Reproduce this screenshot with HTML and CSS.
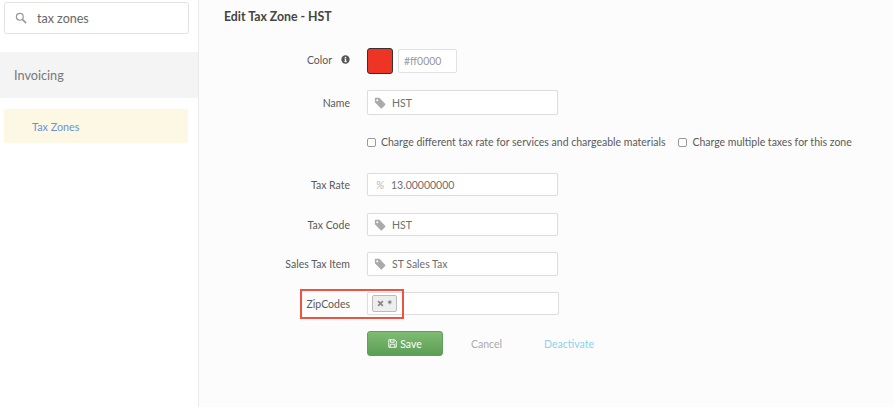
FILE: index.html
```html
<!DOCTYPE html>
<html lang="en">
<head>
<meta charset="utf-8">
<title>Edit Tax Zone - HST</title>
<link rel="stylesheet" href="styles.css">
</head>
<body>
<svg class="defs" width="0" height="0" aria-hidden="true">
  <symbol id="tag" viewBox="0 0 14 14">
    <path fill="currentColor" d="M1 1.5 A.6 .6 0 0 1 1.6 1 H6.2 L13 7.8 A1 1 0 0 1 13 9.2 L9.2 13 A1 1 0 0 1 7.8 13 L1 6.2 Z M3.8 2.6 A1.2 1.2 0 1 0 3.8 5 A1.2 1.2 0 1 0 3.8 2.6 Z" fill-rule="evenodd"/>
  </symbol>
</svg>
<div class="app">
  <aside class="sidebar">
    <div class="search">
      <svg class="search-icon" viewBox="0 0 14 14"><circle cx="5.6" cy="5.6" r="4" fill="none" stroke="currentColor" stroke-width="1.4"/><path d="M8.6 8.6 L13 13" stroke="currentColor" stroke-width="1.8"/></svg>
      <span>tax zones</span>
    </div>
    <div class="section">Invoicing</div>
    <div class="nav-item">Tax Zones</div>
  </aside>
  <main class="main">
    <h1 class="title">Edit Tax Zone - HST</h1>
    <div class="row row-color">
      <div class="label label-color">Color
        <svg class="info" viewBox="0 0 10 10"><circle cx="5" cy="5" r="4.6" fill="currentColor"/><rect x="4.3" y="4.2" width="1.5" height="3.6" fill="#fcfcfc"/><rect x="3.7" y="7" width="2.7" height=".9" fill="#fcfcfc"/><rect x="3.7" y="4.1" width="1.6" height=".8" fill="#fcfcfc"/><circle cx="5" cy="2.8" r=".9" fill="#fcfcfc"/></svg>
      </div>
      <div class="color-controls">
        <div class="swatch"></div>
        <div class="hex">#ff0000</div>
      </div>
    </div>
    <div class="row row-name">
      <div class="label">Name</div>
      <div class="input tall"><svg class="ic"><use href="#tag"/></svg><span>HST</span></div>
    </div>
    <div class="row row-checks">
      <div class="label"></div>
      <div class="checks">
        <label class="check"><span class="box"></span>Charge different tax rate for services and chargeable materials</label>
        <label class="check"><span class="box"></span>Charge multiple taxes for this zone</label>
      </div>
    </div>
    <div class="row row-rate">
      <div class="label">Tax Rate</div>
      <div class="input"><span class="pct">%</span><span>13.00000000</span></div>
    </div>
    <div class="row row-code">
      <div class="label">Tax Code</div>
      <div class="input"><svg class="ic"><use href="#tag"/></svg><span>HST</span></div>
    </div>
    <div class="row row-item">
      <div class="label">Sales Tax Item</div>
      <div class="input tall"><svg class="ic"><use href="#tag"/></svg><span>ST Sales Tax</span></div>
    </div>
    <div class="row row-zip">
      <div class="highlight"></div>
      <div class="label">ZipCodes</div>
      <div class="input zip"><span class="chip"><svg class="x" viewBox="0 0 8 8"><path d="M1.3 1.3 L6.7 6.7 M6.7 1.3 L1.3 6.7" stroke="currentColor" stroke-width="2"/></svg><span class="star">*</span></span></div>
    </div>
    <div class="actions">
      <button class="save" type="button">
        <svg class="disk" viewBox="0 0 12 12"><path fill="none" stroke="currentColor" stroke-width="1.2" d="M1 1 H9 L11 3 V11 H1 Z M3.4 1 V4.4 H8 V1 M3 11 V7 H9 V11"/></svg>Save
      </button>
      <a class="cancel">Cancel</a>
      <a class="deactivate">Deactivate</a>
    </div>
  </main>
</div>
</body>
</html>
```
FILE: styles.css
```css
* { box-sizing: border-box; }
html, body { margin: 0; padding: 0; background: #fff; }
body { font-family: "Lato", "Open Sans", sans-serif; color: #555; font-size: 10.5px; overflow: hidden; }
.defs { position: absolute; }
.app { display: flex; height: 407px; width: 894px; }
.sidebar { width: 199px; flex: none; background: #fff; border-right: 1px solid #eaeaea; padding-top: 2px; }
.search { margin: 0 9px 0 4px; height: 32px; border: 1px solid #e3e3e3; border-radius: 3px; display: flex; align-items: center; padding-left: 10px; font-size: 12.5px; color: #666; gap: 10px; }
.search-icon { width: 12px; height: 12px; color: #999; }
.section { margin-top: 18px; height: 46px; background: #f4f4f4; display: flex; align-items: center; padding-left: 14px; font-size: 12.7px; color: #777; }
.nav-item { margin: 11px 10px 0 4px; height: 34px; background: #fdf8e3; display: flex; align-items: center; padding-left: 28px; font-size: 10.8px; color: #6a91e0; }
.main { flex: 1; background: #fcfcfc; padding: 0 0 0 25px; }
.title { margin: 11px 0 0; height: 12px; line-height: 12px; font-size: 12.3px; font-weight: 700; color: #444; }
.row { display: flex; align-items: center; position: relative; }
.label { width: 126px; flex: none; text-align: right; color: #5a5a5a; margin-right: 17px; }
.label-color { display: flex; justify-content: flex-end; align-items: center; gap: 9px; margin-top: -3px; }
.info { width: 9px; height: 9px; color: #555; }
.row-color { margin-top: 25px; }
.row-name { margin-top: 16px; }
.row-checks { margin-top: 19px; height: 16px; }
.row-rate { margin-top: 23px; }
.row-code { margin-top: 17px; }
.row-item { margin-top: 16px; }
.row-zip { margin-top: 16px; }
.color-controls { display: flex; align-items: center; gap: 5px; }
.swatch { width: 26px; height: 26px; background: #ee3424; border: 1px solid #333; border-radius: 3px; }
.hex { width: 59px; height: 24px; background: #fff; border: 1px solid #e2e2e2; border-radius: 2px; display: flex; align-items: center; padding-left: 5px; color: #999; }
.input { width: 191px; height: 23px; background: #fff; border: 1px solid #dedede; border-radius: 2px; display: flex; align-items: center; padding-left: 6px; color: #6e6e6e; box-shadow: 0 0 1px #e8e8e8; }
.tall { height: 24px; }
.row-name .tall { height: 25px; }
.ic { width: 12px; height: 12px; color: #aaa; margin-right: 6px; flex: none; }
.pct { width: 12px; margin-right: 5px; color: #bbb; font-style: italic; font-size: 11px; text-align: center; }
.checks { display: flex; gap: 13px; }
.check { display: flex; align-items: center; gap: 5px; color: #5a5a5a; white-space: nowrap; }
.box { width: 9px; height: 9px; background: #fff; border: 1px solid #999; border-radius: 2px; flex: none; }
.zip { width: 192px; padding-left: 4px; }
.chip { width: 25px; height: 17px; background: #eee; border: 1px solid #bbb; border-radius: 2px; display: flex; align-items: center; gap: 3px; padding-left: 4px; color: #666; }
.star { font-size: 13px; line-height: 13px; height: 10px; }
.x { width: 7px; height: 7px; color: #888; }
.highlight { position: absolute; left: 76px; top: -3px; width: 104px; height: 30px; border: 2px solid #ee5240; pointer-events: none; }
.actions { display: flex; align-items: center; margin: 16px 0 0 143px; }
.save { width: 76px; height: 25px; border: 1px solid #5f9f5a; border-radius: 3px; background: linear-gradient(#7fbc73, #5b9e54); color: #fff; font: inherit; display: flex; align-items: center; justify-content: center; gap: 3px; padding: 0; }
.disk { width: 9px; height: 9px; }
.cancel { margin-left: 28px; color: #aaa; }
.deactivate { margin-left: 42px; color: #8dd3ea; }
```
